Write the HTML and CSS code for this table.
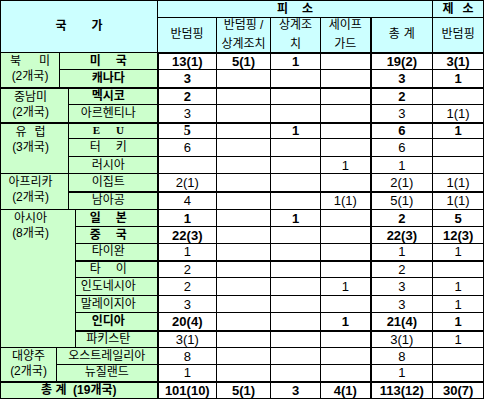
FILE: index.html
```html
<!DOCTYPE html>
<html lang="ko">
<head>
<meta charset="utf-8">
<title>무역구제 피소·제소 현황</title>
<link rel="stylesheet" href="styles.css">
</head>
<body>
<table class="t">
<colgroup>
<col class="w56"><col class="w3"><col class="w9"><col class="w7"><col class="w82">
<col class="w59"><col class="w54"><col class="w50"><col class="w50"><col class="w62"><col class="w51">
</colgroup>
<tr class="h1">
  <th colspan="5" rowspan="2" class="hd nat"><span class="g25">국가</span></th>
  <th colspan="5" class="hd bb"><span class="g14">피소</span></th>
  <th class="hd bb"><span class="g9">제소</span></th>
</tr>
<tr class="h2">
  <th class="hd">반덤핑</th>
  <th class="hd"><div class="two"><span>반덤핑 /</span><span>상계조치</span></div></th>
  <th class="hd"><div class="two"><span>상계조</span><span>치</span></div></th>
  <th class="hd"><div class="two"><span>세이프</span><span>가드</span></div></th>
  <th class="hd tl"><span class="g4">총계</span></th>
  <th class="hd">반덤핑</th>
</tr>

<tr class="r17">
  <td colspan="2" rowspan="2" class="rg"><div class="rl"><span class="g18">북미</span></div><div class="rl2">(2개국)</div></td>
  <td colspan="3" class="ct b"><span class="g15">미국</span></td>
  <td class="d b">13(1)</td><td class="d b">5(1)</td><td class="d b">1</td><td class="d"></td><td class="d tl b">19(2)</td><td class="d b">3(1)</td>
</tr>
<tr class="r18">
  <td colspan="3" class="ct b">캐나다</td>
  <td class="d b">3</td><td class="d"></td><td class="d"></td><td class="d"></td><td class="d tl b">3</td><td class="d b">1</td>
</tr>

<tr class="r17 tk">
  <td colspan="3" rowspan="2" class="rg p8"><div class="rl">중남미</div><div class="rl2">(2개국)</div></td>
  <td colspan="2" class="ct b q9">멕시코</td>
  <td class="d b">2</td><td class="d"></td><td class="d"></td><td class="d"></td><td class="d tl b">2</td><td class="d"></td>
</tr>
<tr class="r18">
  <td colspan="2" class="ct q9">아르헨티나</td>
  <td class="d">3</td><td class="d"></td><td class="d"></td><td class="d"></td><td class="d tl">3</td><td class="d">1(1)</td>
</tr>

<tr class="r16 tk">
  <td colspan="3" rowspan="3" class="rg p8"><div class="rl"><span class="g8">유럽</span></div><div class="rl2">(3개국)</div></td>
  <td colspan="2" class="ct q9"><span class="eu">EU</span></td>
  <td class="d serif">5</td><td class="d"></td><td class="d b">1</td><td class="d"></td><td class="d tl b">6</td><td class="d b">1</td>
</tr>
<tr class="r18">
  <td colspan="2" class="ct q9"><span class="g15">터키</span></td>
  <td class="d">6</td><td class="d"></td><td class="d"></td><td class="d"></td><td class="d tl">6</td><td class="d"></td>
</tr>
<tr class="r17">
  <td colspan="2" class="ct q9">러시아</td>
  <td class="d"></td><td class="d"></td><td class="d"></td><td class="d">1</td><td class="d tl">1</td><td class="d"></td>
</tr>

<tr class="r18">
  <td colspan="3" rowspan="2" class="rg p8"><div class="rl">아프리카</div><div class="rl2">(2개국)</div></td>
  <td colspan="2" class="ct q9">이집트</td>
  <td class="d">2(1)</td><td class="d"></td><td class="d"></td><td class="d"></td><td class="d tl">2(1)</td><td class="d">1(1)</td>
</tr>
<tr class="r18 tk">
  <td colspan="2" class="ct q9">남아공</td>
  <td class="d">4</td><td class="d"></td><td class="d"></td><td class="d">1(1)</td><td class="d tl">5(1)</td><td class="d">1(1)</td>
</tr>

<tr class="r17">
  <td colspan="4" rowspan="8" class="rg p15"><div class="rl">아시아</div><div class="rl2">(8개국)</div></td>
  <td class="ct b q16"><span class="g15">일본</span></td>
  <td class="d b">1</td><td class="d"></td><td class="d b">1</td><td class="d"></td><td class="d tl b">2</td><td class="d b">5</td>
</tr>
<tr class="r17">
  <td class="ct b q16"><span class="g15">중국</span></td>
  <td class="d b">22(3)</td><td class="d"></td><td class="d"></td><td class="d"></td><td class="d tl b">22(3)</td><td class="d b">12(3)</td>
</tr>
<tr class="r17">
  <td class="ct q16">타이완</td>
  <td class="d">1</td><td class="d"></td><td class="d"></td><td class="d"></td><td class="d tl">1</td><td class="d">1</td>
</tr>
<tr class="r17 tk">
  <td class="ct q16"><span class="g15">타이</span></td>
  <td class="d">2</td><td class="d"></td><td class="d"></td><td class="d"></td><td class="d tl">2</td><td class="d"></td>
</tr>
<tr class="r18">
  <td class="ct q16">인도네시아</td>
  <td class="d">2</td><td class="d"></td><td class="d"></td><td class="d">1</td><td class="d tl">3</td><td class="d">1</td>
</tr>
<tr class="r17">
  <td class="ct q16">말레이지아</td>
  <td class="d">3</td><td class="d"></td><td class="d"></td><td class="d"></td><td class="d tl">3</td><td class="d">1</td>
</tr>
<tr class="r18">
  <td class="ct b q16">인디아</td>
  <td class="d b">20(4)</td><td class="d"></td><td class="d"></td><td class="d b">1</td><td class="d tl b">21(4)</td><td class="d b">1</td>
</tr>
<tr class="r17 tk">
  <td class="ct q16">파키스탄</td>
  <td class="d">3(1)</td><td class="d"></td><td class="d"></td><td class="d"></td><td class="d tl">3(1)</td><td class="d">1</td>
</tr>

<tr class="r17">
  <td rowspan="2" class="rg"><div class="rl">대양주</div><div class="rl2">(2개국)</div></td>
  <td colspan="4" class="ct">오스트레일리아</td>
  <td class="d">8</td><td class="d"></td><td class="d"></td><td class="d"></td><td class="d tl">8</td><td class="d"></td>
</tr>
<tr class="r17">
  <td colspan="4" class="ct">뉴질랜드</td>
  <td class="d">1</td><td class="d"></td><td class="d"></td><td class="d"></td><td class="d tl">1</td><td class="d"></td>
</tr>

<tr class="r17 tk">
  <td colspan="5" class="ct b">총&nbsp;계&nbsp;&nbsp;(19개국)</td>
  <td class="d b">101(10)</td><td class="d b">5(1)</td><td class="d b">3</td><td class="d b">4(1)</td><td class="d tl b">113(12)</td><td class="d b">30(7)</td>
</tr>
</table>
</body>
</html>
```

FILE: styles.css
```css
* { box-sizing: border-box; }
html, body { margin: 0; padding: 0; background: #fff; }
body {
  font-family: "Liberation Sans", "Noto Sans CJK KR", sans-serif;
  font-size: 12px;
  color: #000;
}
.t {
  border-collapse: collapse;
  table-layout: fixed;
  width: 484px;
}
.w56 { width: 56px; } .w3 { width: 3px; } .w9 { width: 9px; } .w7 { width: 7px; }
.w82 { width: 82px; } .w59 { width: 59px; } .w54 { width: 54px; } .w50 { width: 50px; }
.w62 { width: 62px; } .w51 { width: 51px; }

.t th, .t td {
  border: 1px solid #000;
  padding: 0;
  text-align: center;
  vertical-align: middle;
  font-weight: normal;
  line-height: 11px;
  white-space: nowrap;
}
.h1 { height: 17px; }
.h2 { height: 35px; }
.r16 { height: 16px; }
.r17 { height: 17px; }
.r18 { height: 18px; }

.hd { background: #ccffff; }
.h1 .hd { font-weight: bold; }
.nat { border-bottom-width: 2px; border-right-width: 2px; }
.h2 th { border-bottom-width: 2px; }
.two {
  height: 32px;
  display: flex;
  flex-direction: column;
  justify-content: space-between;
  line-height: 13px;
}
.tl { border-left-width: 2px !important; }
.tk > td { border-top-width: 2px; }

.rg {
  background: #ccffcc;
  vertical-align: top !important;
}
.rl { height: 17px; line-height: 16px; }
.rl2 { line-height: 13px; }
.p8 { padding-right: 8px !important; }
.p15 { padding-right: 15px !important; }

.ct {
  background: #ccffcc;
  border-right-width: 2px !important;
}
.q9 { padding-right: 9px !important; }
.q16 { padding-right: 16px !important; }

.d { font-size: 13px; background: #fff; }
.b { font-weight: bold !important; }
.t .serif {
  font-family: "Liberation Serif", serif;
  font-weight: bold;
  font-size: 14px;
}
.eu {
  font-family: "Liberation Serif", serif;
  font-weight: bold;
  font-size: 11px;
  letter-spacing: 16px;
  margin-right: -16px;
}

.g25 { letter-spacing: 25px; margin-right: -25px; }
.g18 { letter-spacing: 18px; margin-right: -18px; }
.g15 { letter-spacing: 15px; margin-right: -15px; }
.g14 { letter-spacing: 14px; margin-right: -14px; }
.g9 { letter-spacing: 9px; margin-right: -9px; }
.g8 { letter-spacing: 8px; margin-right: -8px; }
.g4 { letter-spacing: 4px; margin-right: -4px; }
```
